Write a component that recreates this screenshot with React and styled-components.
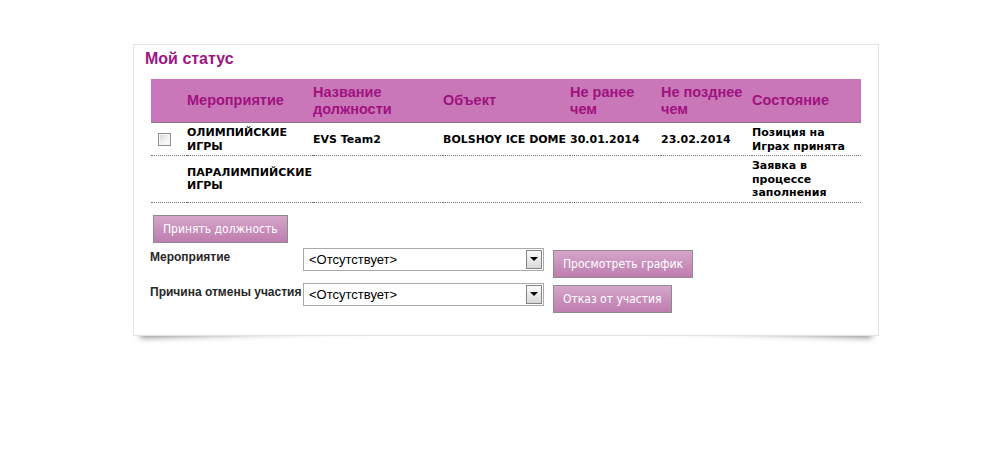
import React from 'react';
import styled, { createGlobalStyle } from 'styled-components';

const GlobalStyle = createGlobalStyle`
  body {
    margin: 0;
    background: #fff;
    font-family: "Liberation Sans", Arial, sans-serif;
  }
`;

const Page = styled.div`
  padding: 44px 0 40px 133px;
`;

const Panel = styled.div`
  position: relative;
  box-sizing: border-box;
  width: 746px;
  padding: 4px 17px 22px 11px;
  background: #fff;
  border: 1px solid #e3e3e3;

  &::before,
  &::after {
    content: '';
    position: absolute;
    z-index: -1;
    bottom: 10px;
    width: 35%;
    height: 20px;
    box-shadow: 0 8px 6px rgba(0, 0, 0, 0.5);
  }

  &::before {
    left: 6px;
    transform: rotate(-2deg);
  }

  &::after {
    right: 6px;
    transform: rotate(2deg);
  }
`;

const Title = styled.h2`
  margin: 0 0 11px;
  font-size: 16px;
  line-height: 19px;
  font-weight: bold;
  color: #9e1482;
`;

const Table = styled.table`
  margin-left: 6px;
  width: 710px;
  border-collapse: collapse;
  table-layout: fixed;
`;

const HeadCell = styled.th`
  height: 43px;
  padding: 0 2px 0 0;
  background: #c977b8;
  border-bottom: 1px solid #8a7a88;
  color: #a0127f;
  font-size: 14.5px;
  line-height: 17px;
  font-weight: bold;
  text-align: left;
  vertical-align: middle;
`;

const Cell = styled.td`
  padding: ${p => (p.$check ? '3px 0 2px 7px' : '3px 2px 2px 0')};
  border-bottom: 1px dotted #6f6f6f;
  font-family: "DejaVu Sans", Verdana, sans-serif;
  font-size: 11px;
  line-height: 13.5px;
  font-weight: bold;
  color: #000;
  vertical-align: middle;
  white-space: ${p => (p.$nowrap ? 'nowrap' : 'normal')};
`;

const CheckBox = styled.span`
  display: block;
  box-sizing: border-box;
  width: 13px;
  height: 13px;
  border: 1px solid #8f8f8f;
  background: linear-gradient(135deg, #d6d6d6 0%, #f4f4f4 60%, #fff 100%);
  box-shadow: inset 0 0 0 1px #f6f6f6;
`;

const Form = styled.div`
  margin: 12px 0 0 5px;
  display: flex;
  flex-direction: column;
  align-items: flex-start;
  gap: 5px;
`;

const Button = styled.button`
  box-sizing: border-box;
  height: 28px;
  padding: 0 9px;
  margin: ${p => p.$margin || '0'};
  border: 1px solid #8c8c8c;
  background: linear-gradient(#d5a5ca, #be7daf);
  color: #fff;
  font-family: "DejaVu Sans Condensed", Tahoma, sans-serif;
  font-size: 12px;
  white-space: nowrap;
  cursor: pointer;
`;

const FormRow = styled.div`
  display: flex;
  align-items: flex-start;
`;

const Label = styled.label`
  width: 153px;
  padding-top: 2px;
  font-size: 12px;
  line-height: 15px;
  font-weight: bold;
  color: #282828;
`;

const Select = styled.div`
  box-sizing: border-box;
  width: 241px;
  height: 23px;
  margin-right: 9px;
  padding: 1px 1px 1px 5px;
  display: flex;
  align-items: center;
  border: 1px solid #a9a9a9;
  background: #fff;
  font-size: 13px;
  color: #000;
`;

const SelectText = styled.span`
  flex: 1;
`;

const ArrowBox = styled.span`
  box-sizing: border-box;
  width: 16px;
  height: 19px;
  display: flex;
  align-items: center;
  justify-content: center;
  border: 1px solid #858585;
  background: linear-gradient(#fbfbfb, #d9d9d9);

  &::after {
    content: '';
    border-left: 4px solid transparent;
    border-right: 4px solid transparent;
    border-top: 4px solid #000;
  }
`;

const columns = [36, 126, 130, 127, 91, 91, 109];

const rows = [
  {
    check: true,
    event: 'ОЛИМПИЙСКИЕ ИГРЫ',
    position: 'EVS Team2',
    venue: 'BOLSHOY ICE DOME',
    from: '30.01.2014',
    to: '23.02.2014',
    status: 'Позиция на Играх принята',
  },
  {
    check: false,
    event: 'ПАРАЛИМПИЙСКИЕ ИГРЫ',
    position: '',
    venue: '',
    from: '',
    to: '',
    status: 'Заявка в процессе заполнения',
  },
];

const Dropdown = ({ value }) => (
  <Select>
    <SelectText>{value}</SelectText>
    <ArrowBox />
  </Select>
);

const App = () => {
  return (
    <>
      <GlobalStyle />
      <Page>
        <Panel>
          <Title>Мой статус</Title>
          <Table>
            <colgroup>
              {columns.map((w, i) => (
                <col key={i} style={{ width: w }} />
              ))}
            </colgroup>
            <thead>
              <tr>
                <HeadCell />
                <HeadCell>Мероприятие</HeadCell>
                <HeadCell>Название должности</HeadCell>
                <HeadCell>Объект</HeadCell>
                <HeadCell>Не ранее чем</HeadCell>
                <HeadCell>Не позднее чем</HeadCell>
                <HeadCell>Состояние</HeadCell>
              </tr>
            </thead>
            <tbody>
              {rows.map((r, i) => (
                <tr key={i}>
                  <Cell $check>{r.check && <CheckBox />}</Cell>
                  <Cell>{r.event}</Cell>
                  <Cell>{r.position}</Cell>
                  <Cell $nowrap>{r.venue}</Cell>
                  <Cell>{r.from}</Cell>
                  <Cell>{r.to}</Cell>
                  <Cell>{r.status}</Cell>
                </tr>
              ))}
            </tbody>
          </Table>
          <Form>
            <Button $margin="0 0 0 3px">Принять должность</Button>
            <FormRow>
              <Label>Мероприятие</Label>
              <Dropdown value="<Отсутствует>" />
              <Button $margin="2px 0 0">Просмотреть график</Button>
            </FormRow>
            <FormRow>
              <Label>Причина отмены участия</Label>
              <Dropdown value="<Отсутствует>" />
              <Button $margin="2px 0 0">Отказ от участия</Button>
            </FormRow>
          </Form>
        </Panel>
      </Page>
    </>
  );
};

export default App;
